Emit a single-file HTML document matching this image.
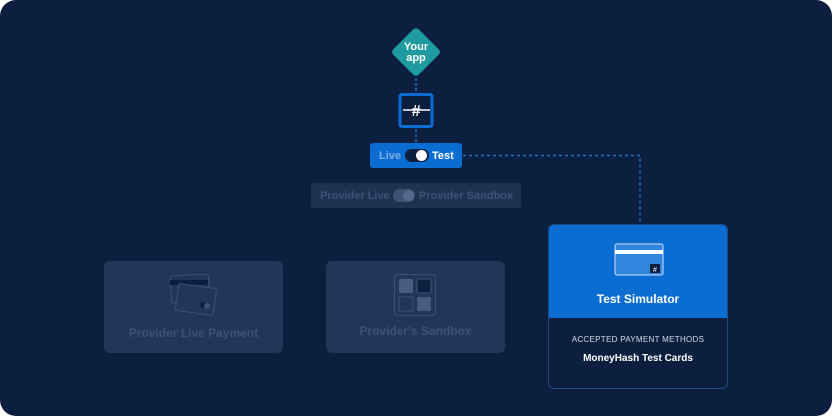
<!DOCTYPE html><html><head><style>
body{margin:0;background:#fff;width:832px;height:416px;overflow:hidden;font-family:"Liberation Sans",sans-serif}
.bg{position:absolute;left:0;top:0;width:832px;height:416px;background:#0c1f3f;border-radius:16px}
.a{position:absolute}
.card{position:absolute;background:#22365a;border-radius:6px;color:#3d5275;font-size:12px;font-weight:bold;text-align:center}
</style></head><body><div class="bg"></div>
<svg class="a" style="left:0;top:0" width="832" height="416">
<line x1="416" y1="78" x2="416" y2="93" stroke="#1f6fc8" stroke-width="1.5" stroke-dasharray="3 2"/>
<line x1="416" y1="129" x2="416" y2="143" stroke="#1f6fc8" stroke-width="1.5" stroke-dasharray="3 2"/>
<path d="M463 155.5H640V224" fill="none" stroke="#1f6fc8" stroke-width="1.5" stroke-dasharray="3 3"/>
<rect x="398" y="34" width="36" height="36" rx="4" fill="#1f9aa0" transform="rotate(45 416 52)"/>
<text x="416" y="50" fill="#fff" font-size="11" font-weight="bold" text-anchor="middle" font-family="Liberation Sans">Your</text>
<text x="416" y="61" fill="#fff" font-size="11" font-weight="bold" text-anchor="middle" font-family="Liberation Sans">app</text>
<rect x="400" y="94.5" width="32" height="32" rx="2" fill="#0c1f3f" stroke="#0b6dd1" stroke-width="3"/>
<line x1="403" y1="110" x2="430" y2="110" stroke="#fff" stroke-width="1.5"/>
<text x="416" y="116" fill="#fff" font-size="16" font-weight="bold" font-style="italic" text-anchor="middle" font-family="Liberation Sans">#</text>
</svg>
<div class="a" style="left:370px;top:143px;width:92px;height:25px;background:#0b6dd1;border-radius:3px;color:#fff;font-size:11px;font-weight:bold;line-height:27px">
<span style="position:absolute;left:9px;color:#7fb0e8">Live</span>
<span style="position:absolute;left:35px;top:6px;width:24px;height:13px;border-radius:7px;background:#0c1f3f"></span>
<span style="position:absolute;left:46px;top:7px;width:11px;height:11px;border-radius:50%;background:#fff"></span>
<span style="position:absolute;left:62px">Test</span></div>
<div class="a" style="left:311px;top:183px;width:210px;height:25px;background:#1f3252;border-radius:3px;color:#3d5275;font-size:11px;font-weight:bold;line-height:27px">
<span style="position:absolute;left:9px">Provider Live</span>
<span style="position:absolute;left:82px;top:6px;width:22px;height:13px;border-radius:7px;background:#3d5275"></span>
<span style="position:absolute;left:92px;top:7px;width:11px;height:11px;border-radius:50%;background:#56698a"></span>
<span style="position:absolute;left:108px">Provider Sandbox</span></div>
<div class="card" style="left:104px;top:261px;width:179px;height:92px">
<svg class="a" style="left:66px;top:13px" width="50" height="50"><rect x="1" y="1" width="38" height="27" rx="2" fill="none" stroke="#3d5275" transform="rotate(-3 20 15)"/><rect x="0" y="6" width="38" height="5" fill="#0c1f3f"/><rect x="7" y="12" width="38" height="27" rx="2" fill="#22365a" stroke="#3d5275" transform="rotate(8 26 25)"/><circle cx="33" cy="31" r="3" fill="#0c1f3f"/><circle cx="37" cy="32" r="3" fill="#3d5275"/></svg>
<div class="a" style="left:0;right:0;top:65px">Provider Live Payment</div></div>
<div class="card" style="left:326px;top:261px;width:179px;height:92px">
<svg class="a" style="left:68px;top:13px" width="44" height="44"><rect x="0.5" y="0.5" width="41" height="41" rx="3" fill="none" stroke="#3d5275"/><rect x="5" y="5" width="14" height="14" rx="1" fill="#4a5d80"/><rect x="23" y="5" width="14" height="14" rx="1" fill="#0c1f3f" stroke="#3d5275"/><rect x="5" y="23" width="14" height="14" rx="1" fill="none" stroke="#3d5275"/><rect x="23" y="23" width="14" height="14" rx="1" fill="#4a5d80"/></svg>
<div class="a" style="left:0;right:0;top:63px">Provider's Sandbox</div></div>
<div class="a" style="left:548px;top:224px;width:178px;height:163px;border:1px solid #1c4a86;border-radius:6px;background:#0c1f3f;overflow:hidden;text-align:center">
<div style="height:93px;background:#0b6dd1;position:relative">
<svg class="a" style="left:65px;top:18px" width="50" height="34"><rect x="1" y="1" width="48" height="31" rx="2" fill="#2f86dc" stroke="#cfe3f7" stroke-width="1"/><rect x="1" y="7" width="48" height="4" fill="#fff"/><rect x="36" y="21" width="10" height="9" fill="#0c1f3f"/><text x="41" y="29" font-size="7" fill="#fff" text-anchor="middle">#</text></svg>
<div class="a" style="left:0;right:0;top:67px;color:#fff;font-size:12px;font-weight:bold">Test Simulator</div></div>
<div style="color:#d5dce8;font-size:8px;margin-top:17px;letter-spacing:.3px">ACCEPTED PAYMENT METHODS</div>
<div style="color:#fff;font-size:10px;font-weight:bold;margin-top:9px">MoneyHash Test Cards</div></div>
</body></html>
